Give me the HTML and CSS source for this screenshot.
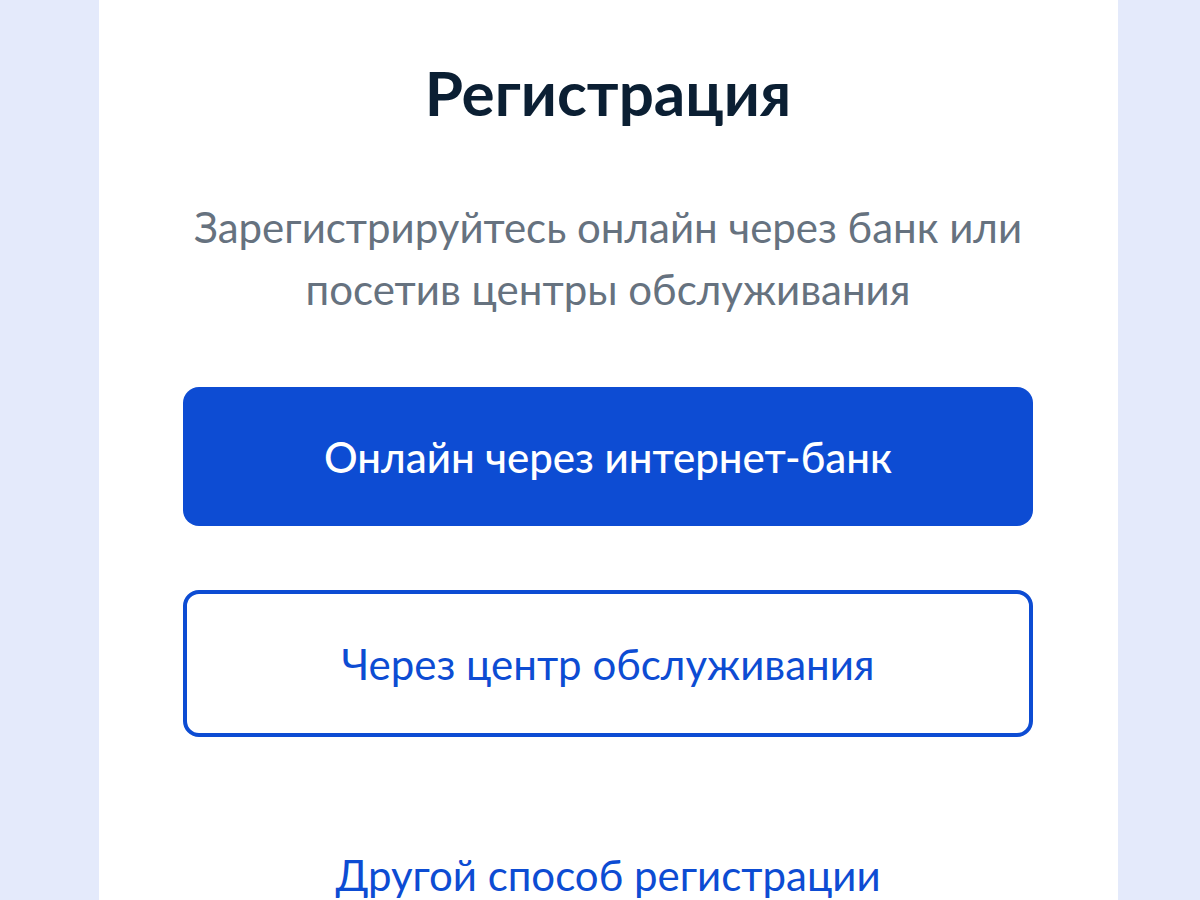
FILE: index.html
```html
<!doctype html>
<html lang="ru">
<head>
    <meta charset="UTF-8">
    <meta name="viewport" content="width=device-width, initial-scale=1.0">
    <title>Регистрация</title>
    <link rel="stylesheet" href="styles.css">
</head>
<body>
<div class="page">
    <div class="card">
        <h1 class="title">Регистрация</h1>
        <p class="subtitle">Зарегистрируйтесь онлайн через банк или<br>посетив центры обслуживания</p>
        <div class="actions">
            <button class="btn btn_primary">Онлайн через интернет-банк</button>
            <button class="btn btn_outline">Через центр обслуживания</button>
        </div>
        <a class="other_link" href="#">Другой способ регистрации</a>
    </div>
</div>
</body>
</html>
```

FILE: styles.css
```css
html, body {
    margin: 0;
    padding: 0;
}

body {
    background: #e4eafb;
    font-family: Lato, "Noto Sans", sans-serif;
    overflow: hidden;
}

.page {
    height: 900px;
    padding-left: 99px;
}

.card {
    box-sizing: border-box;
    width: 1019px;
    min-height: 1000px;
    background: #fff;
    padding: 49px 85px 0 84px;
    display: flex;
    flex-direction: column;
    align-items: center;
}

.title {
    margin: 0;
    font-size: 62px;
    font-weight: 700;
    line-height: 86px;
    color: #0b1f33;
}

.subtitle {
    margin: 61px 0 0;
    font-size: 42px;
    line-height: 62px;
    color: #66727f;
    text-align: center;
}

.actions {
    width: 100%;
    margin-top: 67px;
    display: flex;
    flex-direction: column;
    gap: 64px;
}

.btn {
    box-sizing: border-box;
    width: 100%;
    height: 139px;
    border-radius: 16px;
    font-family: inherit;
    font-size: 42px;
    cursor: pointer;
}

.btn_primary {
    background: #0d4cd3;
    border: none;
    color: #fff;
    font-weight: 500;
}

.btn_outline {
    height: 147px;
    background: #fff;
    border: 4px solid #0d4cd3;
    color: #0d4cd3;
    font-weight: 400;
}

.other_link {
    margin-top: 113px;
    font-size: 42px;
    color: #0d4cd3;
    text-decoration: none;
}
```
